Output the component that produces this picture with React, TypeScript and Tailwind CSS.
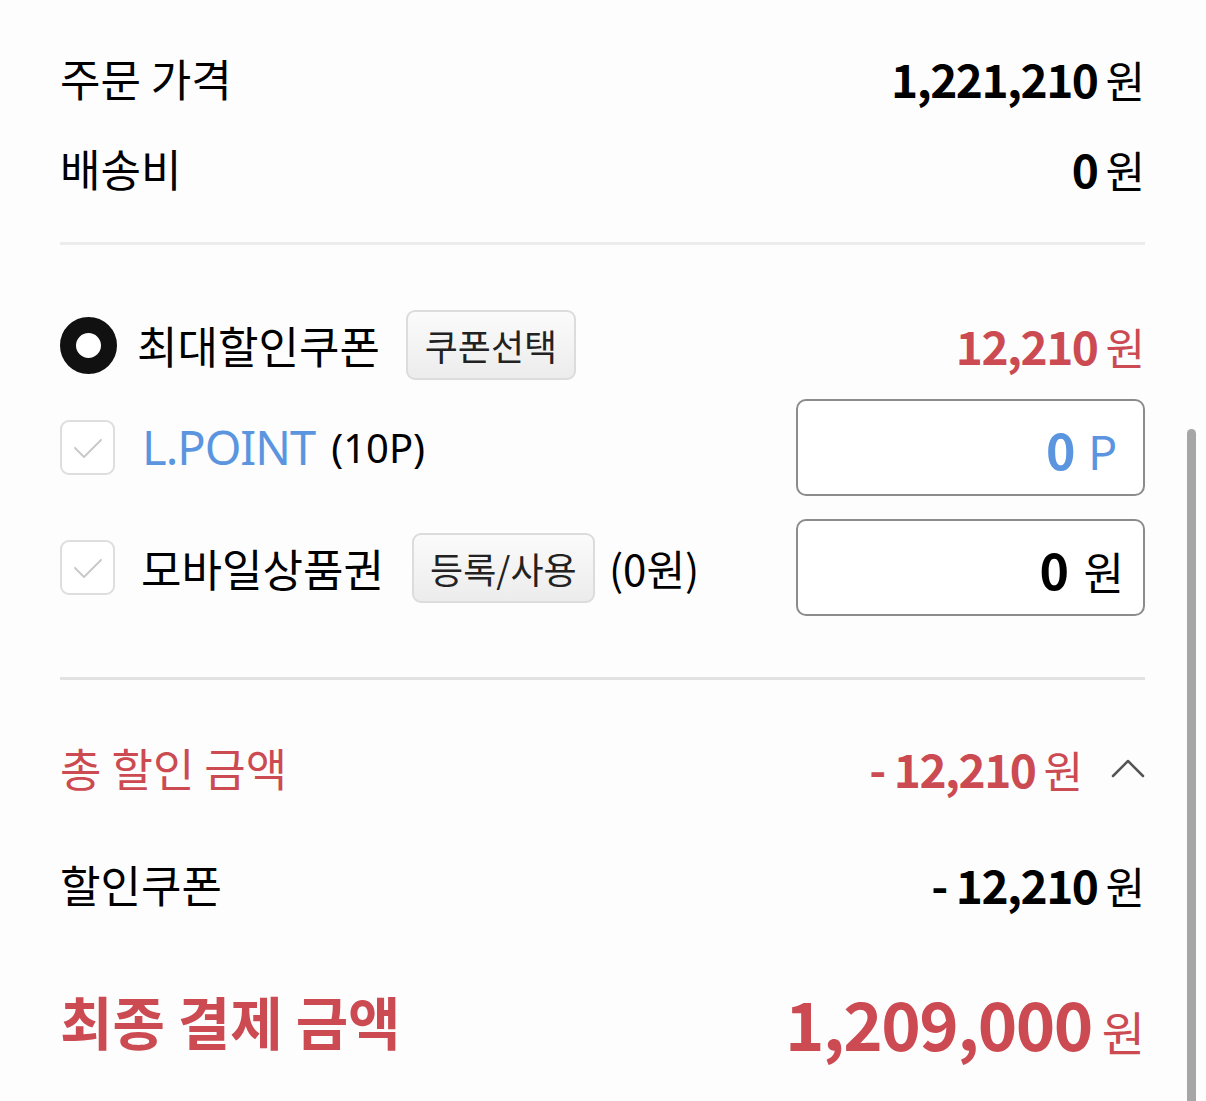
import React from "react";

const KR = "font-['Noto_Sans_CJK_KR','Noto_Sans',sans-serif]";
const RED = "text-[#cc4a51]";

function Amount({
  value,
  unit = "원",
  tone = "text-black",
  numSize = "text-[46px]",
  unitSize = "text-[43px]",
  gap = "gap-[8px]",
}: {
  value: string;
  unit?: string;
  tone?: string;
  numSize?: string;
  unitSize?: string;
  gap?: string;
}) {
  return (
    <div className={`flex items-baseline ${gap} ${tone}`}>
      <span className={`${numSize} font-bold tracking-[-1.5px] leading-none`}>{value}</span>
      <span className={`${unitSize} font-normal leading-none`}>{unit}</span>
    </div>
  );
}

function CheckBox() {
  return (
    <div className="w-[55px] h-[55px] rounded-[9px] border-2 border-[#dedede] bg-white flex items-center justify-center shrink-0">
      <svg width="36" height="36" viewBox="0 0 36 36" fill="none">
        <polyline
          points="5,18 14,27 31,10"
          stroke="#c9c9c9"
          strokeWidth="2"
          strokeLinecap="round"
          strokeLinejoin="round"
        />
      </svg>
    </div>
  );
}

function GrayButton({ label, w }: { label: string; w: string }) {
  return (
    <div
      className={`${w} h-[70px] rounded-[9px] border-2 border-[#dcdcdc] bg-gradient-to-b from-[#fbfbfb] to-[#ececec] flex items-center justify-center text-[36px] text-[#222] leading-none shrink-0`}
    >
      {label}
    </div>
  );
}

function InputBox({ children, pr }: { children: React.ReactNode; pr: string }) {
  return (
    <div className={`w-[349px] h-[97px] rounded-[10px] border-2 border-[#8c8c8c] bg-white flex items-center justify-end ${pr}`}>
      {children}
    </div>
  );
}

export default function App() {
  return (
    <div className={`relative w-[1206px] h-[1101px] bg-[#fdfdfd] overflow-hidden ${KR}`}>
      <div className="w-[1206px] pl-[60px] pr-[61px] pt-[33px]">
        {/* order price */}
        <div className="h-[90px] flex items-center justify-between">
          <span className="text-[44px] text-black">주문 가격</span>
          <Amount value="1,221,210" />
        </div>
        <div className="h-[90px] flex items-center justify-between">
          <span className="text-[44px] text-black">배송비</span>
          <Amount value="0" />
        </div>

        <div className="mt-[29px] h-[3px] bg-[#ececec]" />

        {/* coupon */}
        <div className="mt-[55px] h-[90px] flex items-center justify-between">
          <div className="flex items-center">
            <div className="w-[57px] h-[57px] rounded-full border-[16px] border-[#111] bg-white shrink-0" />
            <span className="ml-[20px] text-[44px] text-black">최대할인쿠폰</span>
            <div className="ml-[26px]">
              <GrayButton label="쿠폰선택" w="w-[170px]" />
            </div>
          </div>
          <Amount value="12,210" tone={RED} />
        </div>

        {/* L.POINT */}
        <div className="mt-[9px] h-[97px] flex items-center justify-between">
          <div className="flex items-center">
            <CheckBox />
            <span className="ml-[27px] text-[47px] tracking-[-1px] text-[#5b95df] font-['Noto_Sans',sans-serif]">
              L.POINT
            </span>
            <span className="ml-[16px] text-[40px] text-black font-['Noto_Sans',sans-serif]">(10P)</span>
          </div>
          <InputBox pr="pr-[26px]">
            <Amount value="0" unit="P" tone="text-[#5b95df]" numSize="text-[50px]" unitSize="text-[46px]" gap="gap-[14px]" />
          </InputBox>
        </div>

        {/* mobile gift card */}
        <div className="mt-[23px] h-[97px] flex items-center justify-between">
          <div className="flex items-center">
            <CheckBox />
            <span className="ml-[26px] text-[44px] text-black">모바일상품권</span>
            <div className="ml-[28px]">
              <GrayButton label="등록/사용" w="w-[183px]" />
            </div>
            <span className="ml-[14px] text-[42px] text-black">(0원)</span>
          </div>
          <InputBox pr="pr-[19px]">
            <Amount value="0" numSize="text-[50px]" unitSize="text-[44px]" gap="gap-[16px]" />
          </InputBox>
        </div>

        <div className="mt-[61px] h-[3px] bg-[#e2e2e2]" />

        {/* total discount */}
        <div className="mt-[43px] h-[90px] flex items-center justify-between">
          <span className={`text-[45px] ${RED}`}>총 할인 금액</span>
          <div className="flex items-center">
            <Amount value="-  12,210" tone={RED} />
            <svg className="ml-[28px]" width="34" height="22" viewBox="0 0 34 22" fill="none">
              <polyline
                points="2,19 17,4 32,19"
                stroke="#555"
                strokeWidth="2.5"
                strokeLinecap="round"
                strokeLinejoin="round"
              />
            </svg>
          </div>
        </div>

        <div className="mt-[26px] h-[90px] flex items-center justify-between">
          <span className="text-[44px] text-black">할인쿠폰</span>
          <Amount value="- 12,210" />
        </div>

        {/* final */}
        <div className="mt-[47px] h-[90px] flex items-center justify-between">
          <span className={`text-[57px] font-bold ${RED}`}>최종 결제 금액</span>
          <Amount value="1,209,000" tone={RED} numSize="text-[67px]" unitSize="text-[47px]" gap="gap-[10px]" />
        </div>
      </div>

      {/* scroll indicator */}
      <div className="absolute right-[10px] top-[429px] w-[9px] h-[680px] rounded-t-full bg-[#a6a6a6]" />
    </div>
  );
}
